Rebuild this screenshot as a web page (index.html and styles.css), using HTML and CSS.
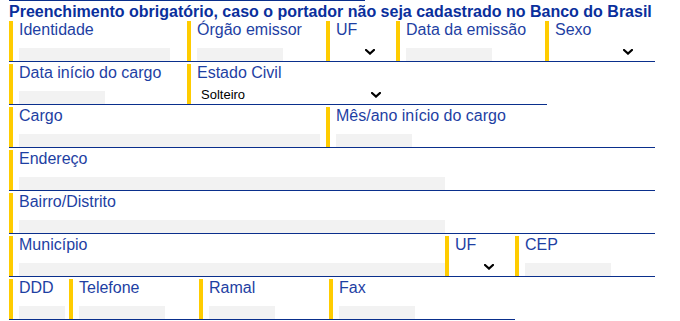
FILE: index.html
```html
<!DOCTYPE html>
<html lang="pt-BR">
<head>
<meta charset="utf-8">
<title>Cadastro</title>
<link rel="stylesheet" href="styles.css">
</head>
<body>
<div class="page">
  <div class="topline"></div>
  <h1 class="title">Preenchimento obrigatório, caso o portador não seja cadastrado no Banco do Brasil</h1>

  <div class="row w-full">
    <div class="cell c178"><span class="lbl">Identidade</span><div class="inp i151"></div></div>
    <div class="cell c139"><span class="lbl">Órgão emissor</span><div class="inp i86"></div></div>
    <div class="cell c70"><span class="lbl">UF</span><div class="sel s43"><svg class="chev" viewBox="0 0 10 6"><path d="M1 1 L5 4.6 L9 1" /></svg></div></div>
    <div class="cell c149"><span class="lbl">Data da emissão</span><div class="inp i86"></div></div>
    <div class="cell grow"><span class="lbl">Sexo</span><div class="sel s82"><svg class="chev" viewBox="0 0 10 6"><path d="M1 1 L5 4.6 L9 1" /></svg></div></div>
  </div>

  <div class="row w-538">
    <div class="cell c178"><span class="lbl">Data início do cargo</span><div class="inp i86"></div></div>
    <div class="cell grow"><span class="lbl">Estado Civil</span><div class="sel s188"><span class="opt">Solteiro</span><svg class="chev" viewBox="0 0 10 6"><path d="M1 1 L5 4.6 L9 1" /></svg></div></div>
  </div>

  <div class="row w-full">
    <div class="cell c317"><span class="lbl">Cargo</span><div class="inp i301"></div></div>
    <div class="cell grow"><span class="lbl">Mês/ano início do cargo</span><div class="inp i76"></div></div>
  </div>

  <div class="row w-full">
    <div class="cell grow"><span class="lbl">Endereço</span><div class="inp i426"></div></div>
  </div>

  <div class="row w-full">
    <div class="cell grow"><span class="lbl">Bairro/Distrito</span><div class="inp i426"></div></div>
  </div>

  <div class="row w-full">
    <div class="cell c436"><span class="lbl">Município</span><div class="inp i426"></div></div>
    <div class="cell c70"><span class="lbl">UF</span><div class="sel s43"><svg class="chev" viewBox="0 0 10 6"><path d="M1 1 L5 4.6 L9 1" /></svg></div></div>
    <div class="cell grow"><span class="lbl">CEP</span><div class="inp i86"></div></div>
  </div>

  <div class="row w-506">
    <div class="cell c60"><span class="lbl">DDD</span><div class="inp i46"></div></div>
    <div class="cell c130"><span class="lbl">Telefone</span><div class="inp i86"></div></div>
    <div class="cell c130"><span class="lbl">Ramal</span><div class="inp i66"></div></div>
    <div class="cell grow"><span class="lbl">Fax</span><div class="inp i76"></div></div>
  </div>
</div>
</body>
</html>
```

FILE: styles.css
```css
html, body {
  margin: 0;
  padding: 0;
  background: #ffffff;
}

.page {
  padding: 0 9px;
  font-family: "Liberation Sans", Arial, sans-serif;
}

.topline {
  width: 356px;
  height: 1px;
  background: #0a2f8c;
}

.title {
  margin: 2px 0 0 0;
  font-size: 16px;
  line-height: 18px;
  font-weight: bold;
  color: #0a2f9c;
  white-space: nowrap;
}

.row {
  display: flex;
  border-bottom: 1px solid #0a2f8c;
  margin-bottom: 2px;
}

.w-full { width: 646px; }
.w-538 { width: 538px; }
.w-506 { width: 506px; }

.cell {
  box-sizing: border-box;
  height: 40px;
  border-left: 4px solid #ffcc00;
  padding-left: 6px;
  padding-top: 1px;
  display: flex;
  flex-direction: column;
  justify-content: space-between;
  align-items: flex-start;
}

.grow { flex: 1; }
.c178 { width: 178px; }
.c139 { width: 139px; }
.c70 { width: 70px; }
.c149 { width: 149px; }
.c317 { width: 317px; }
.c436 { width: 436px; }
.c60 { width: 60px; }
.c130 { width: 130px; }

.lbl {
  font-size: 16px;
  line-height: 16px;
  color: #1e3fa3;
  white-space: nowrap;
}

.inp {
  height: 13px;
  background: #f2f2f2;
}

.i151 { width: 151px; }
.i86 { width: 86px; }
.i301 { width: 301px; }
.i76 { width: 76px; }
.i426 { width: 426px; }
.i46 { width: 46px; }
.i66 { width: 66px; }

.sel {
  box-sizing: border-box;
  height: 18px;
  display: flex;
  align-items: center;
  justify-content: space-between;
  padding: 0 4px;
  background: #ffffff;
}

.s43 { width: 43px; justify-content: flex-end; }
.s82 { width: 82px; justify-content: flex-end; }
.s188 { width: 188px; }

.opt {
  font-size: 13px;
  color: #000000;
  line-height: 18px;
}

.chev {
  width: 10px;
  height: 6px;
  display: block;
}

.chev path {
  fill: none;
  stroke: #000000;
  stroke-width: 2.2;
  stroke-linecap: square;
  stroke-linejoin: miter;
}
```
